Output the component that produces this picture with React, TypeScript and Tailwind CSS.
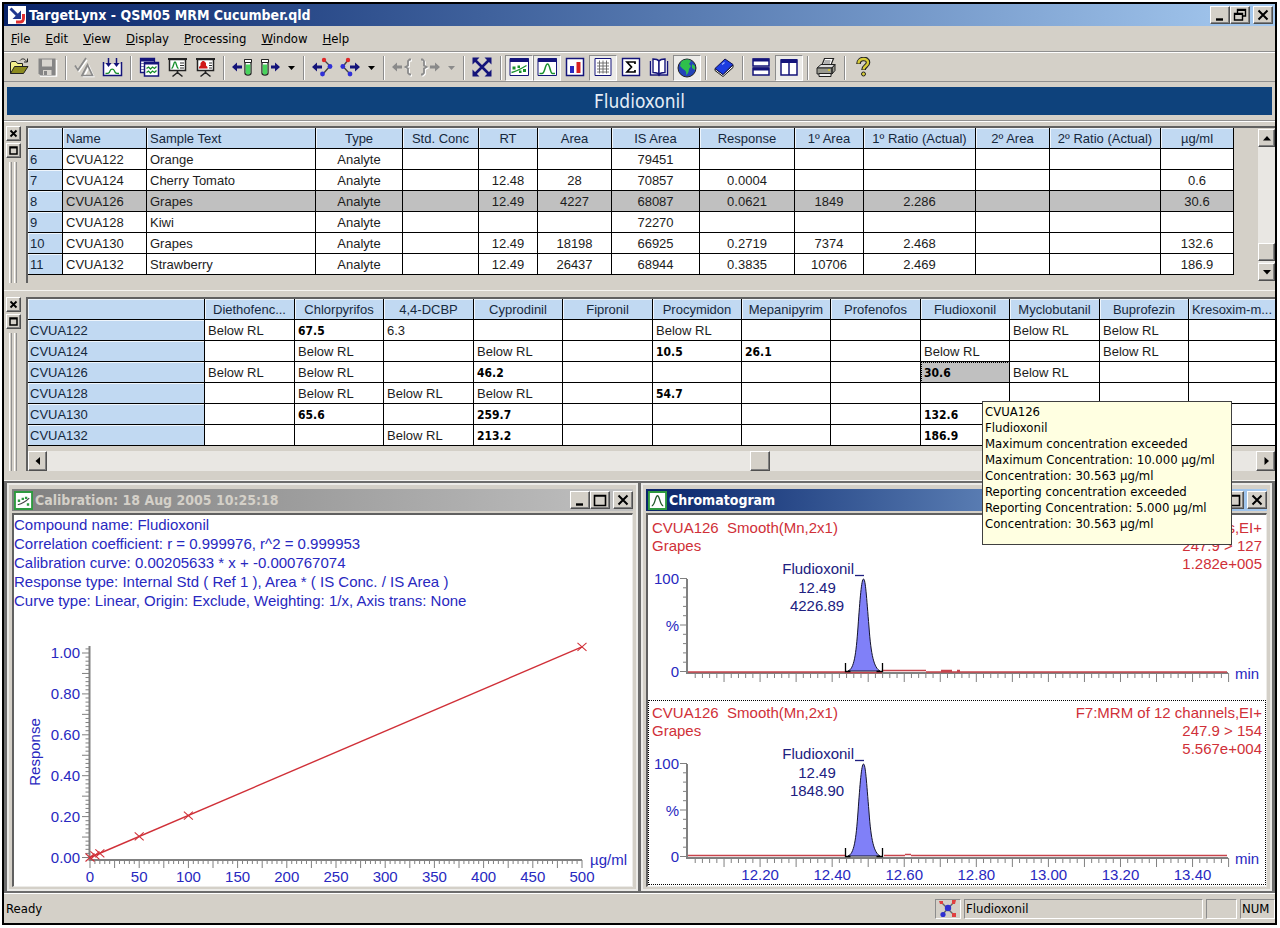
import type { ReactNode } from "react";

const TAHOMA = "font-['DejaVu_Sans_Condensed','DejaVu_Sans',sans-serif]";
const RAISED =
  "bg-[#d4d0c8] border border-t-white border-l-white border-r-[#505050] border-b-[#505050] shadow-[inset_-1px_-1px_0_#808080]";

/* ---------- window chrome ---------- */

function Glyph({ kind }: { kind: string }) {
  return (
    <svg viewBox="0 0 14 14" className="h-3.5 w-3.5" fill="none" stroke="#000" aria-hidden="true">
      {kind === "minimize" && <path d="M3 11.5h7" strokeWidth="2.4" />}
      {kind === "maximize" && <path d="M1.5 12.5v-10h11v10zM1.5 3h11" strokeWidth="1.6" />}
      {kind === "restore" && (
        <path d="M4.5 5V1.5h8v6.5H10M4.5 2.2h8M1.5 5.5h8v6.5h-8zM1.5 6.3h8" strokeWidth="1.4" />
      )}
      {kind === "close" && <path d="M2.5 2.5l9 9M11.5 2.5l-9 9" strokeWidth="2" />}
    </svg>
  );
}

function CaptionButton({ kind, label }: { kind: string; label: string }) {
  return (
    <button aria-label={label} className={`flex h-[18px] w-5 items-center justify-center ${RAISED}`}>
      <Glyph kind={kind} />
    </button>
  );
}

function CaptionButtons({ middle }: { middle: string }) {
  return (
    <div className="flex">
      <CaptionButton kind="minimize" label="Minimize" />
      <CaptionButton kind={middle} label={middle === "restore" ? "Restore" : "Maximize"} />
      <div className="w-[3px]" />
      <CaptionButton kind="close" label="Close" />
    </div>
  );
}

function Arrow({ d }: { d: string }) {
  return (
    <svg viewBox="0 0 10 10" className="h-2.5 w-2.5" aria-hidden="true">
      <path d={d} fill="#000" />
    </svg>
  );
}

/* ---------- toolbar icons ---------- */

const NAVY = "#14147a";

const icons: Record<string, ReactNode> = {
  open: (
    <>
      <path d="M1.5 16.500v-11l1.500-1h4l1.500 2h5v3" fill="#f4f08c" stroke="#222" />
      <path d="M1.500 16.500l4-7h13.500l-4.500 7z" fill="#8c8a1e" stroke="#222" />
      <path d="M11 3.500c2-2.500 5-2 6.500 1M18.500 1.500v3.500h-3.500" fill="none" stroke="#222" />
    </>
  ),
  save: (
    <>
      <path d="M3 19h16.500V3" fill="none" stroke="#fff" strokeWidth="1.5" />
      <path d="M1.500 1.500h17v17h-15l-2-2z" fill="#858585" />
      <path d="M5 2.500h10v7H5z" fill="#d8d5cf" />
      <path d="M6 13h8.500v5H6z" fill="#d8d5cf" />
      <path d="M7 14h3v4H7z" fill="#858585" />
    </>
  ),
  process: (
    <g fill="none" strokeWidth="1.700">
      <path d="M2 9.500l3 4.500 8-11M10 19.500l5-10 4.500 10z" stroke="#fff" />
      <path d="M1 8.500l3 4.500 8-12" stroke="#8a8a8a" />
      <path d="M8 18.500l5.500-10.500 5 10.500z" stroke="#8a8a8a" />
    </g>
  ),
  integrate: (
    <>
      <path d="M2 7h17v12H2z" fill="#fff" />
      <path d="M1.500 5v13.500h18V5" fill="none" stroke={NAVY} strokeWidth="1.500" />
      <path d="M6.500 1v7M14.500 1v7" stroke={NAVY} strokeWidth="1.500" />
      <path d="M3.500 6h6l-3 4zM11.500 6h6l-3 4z" fill={NAVY} />
      <path d="M3.500 16.500c3 0 3.500 0 4.500-2.500s3.500-2.500 4.500 0 1.500 2.500 4.500 2.500" fill="none" stroke="#18902c" strokeWidth="1.300" />
    </>
  ),
  windows: (
    <g stroke={NAVY}>
      <path d="M1.500 1.500h14v14h-14z" fill="#fff" strokeWidth="1.300" />
      <path d="M1.500 3h14" strokeWidth="3" />
      <path d="M2 6.500h3M2 9.500h3M2 12.500h3" stroke="#7777aa" />
      <path d="M5.500 5.500h14v13.500h-14z" fill="#fff" strokeWidth="1.500" />
      <path d="M5.500 6.500h14" strokeWidth="2" />
      <path d="M7.500 11.500l2-1.500 2 2 2-2 2 1.500 2-2M7.500 15.500l2-1.500 2 2 2-2 2 1.500 2-2" fill="none" stroke="#18902c" strokeWidth="1.300" />
    </g>
  ),
  board: (
    <>
      <path d="M2.500 2.500h16v11h-16z" fill="#fff" stroke="#222" strokeWidth="1.500" />
      <path d="M1 2h19" stroke="#222" strokeWidth="2" />
      <path d="M4.500 11.500c2 0 2-6.500 3.500-6.500s1.500 6.500 3.500 6.500" fill="none" stroke="#18902c" strokeWidth="1.400" />
      <path d="M13 6h4M13 8.500h4M13 11h4" stroke="#333" />
      <path d="M10.500 14v3M10.500 15.500l-5 4M10.500 15.500l5 4" stroke="#222" strokeWidth="1.600" />
    </>
  ),
  alarm: (
    <>
      <path d="M2.500 2.500h16v11h-16z" fill="#fff" stroke="#222" strokeWidth="1.500" />
      <path d="M1 2h19" stroke="#222" strokeWidth="2" />
      <path d="M4 11.500v-1.500l1.500-1.500V6l2-2h1.500l2 2v2.500l1.500 1.500v1.500z" fill="#d01818" />
      <path d="M14 6h3M14 8.500h3M14 11h3" stroke="#333" />
      <path d="M10.500 14v3M10.500 15.500l-5 4M10.500 15.500l5 4" stroke="#222" strokeWidth="1.600" />
    </>
  ),
  prevSample: (
    <>
      <path d="M0 10l5-4.500v3h5v3H5v3z" fill={NAVY} />
      <path d="M13 3v13a3 2 0 006 0V3z" fill="#fff" stroke="#222" strokeWidth="1.300" />
      <path d="M13.700 7.500h4.600V16a2.300 1.500 0 01-4.600 0z" fill="#48d45c" />
      <path d="M12.500 2.500h7v3h-7z" fill="#fff" stroke="#222" />
    </>
  ),
  nextSample: (
    <>
      <path d="M20 10l-5-4.500v3h-4v3h4v3z" fill={NAVY} />
      <path d="M2 3v13a3 2 0 006 0V3z" fill="#fff" stroke="#222" strokeWidth="1.300" />
      <path d="M2.700 7.500h4.600V16a2.300 1.500 0 01-4.600 0z" fill="#48d45c" />
      <path d="M1.500 2.500h7v3h-7z" fill="#fff" stroke="#222" />
    </>
  ),
  prevCompound: (
    <>
      <path d="M12 3l6 6-7 8" fill="none" stroke="#444" strokeWidth="1.400" />
      <path d="M0 10l5-4.500v3h5v3H5v3z" fill={NAVY} />
      <circle cx="12" cy="3" r="2.200" fill="#e02828" />
      <circle cx="18" cy="9.500" r="2.400" fill="#3030d8" />
      <circle cx="10.500" cy="17" r="2.400" fill="#3030d8" />
    </>
  ),
  nextCompound: (
    <>
      <path d="M8 3L3 9.500l7 7.500" fill="none" stroke="#444" strokeWidth="1.400" />
      <path d="M20 10l-5-4.500v3h-5v3h5v3z" fill={NAVY} />
      <circle cx="8" cy="3" r="2.200" fill="#e02828" />
      <circle cx="2.800" cy="9.500" r="2.400" fill="#3030d8" />
      <circle cx="10" cy="17" r="2.400" fill="#3030d8" />
    </>
  ),
  prevGroup: (
    <>
      <path d="M0 10l5-4.500v3h5v3H5v3z" fill="#8a8a8a" />
      <path d="M20 3.500h-1.500l-1.500 1.500v4.500l-2.500 1.500 2.500 1.500V17l1.500 1.500H20" fill="none" stroke="#fff" strokeWidth="1.800" />
      <path d="M19 2.500h-1.500L16 4v4.500L13.500 10l2.500 1.500V16l1.500 1.500H19" fill="none" stroke="#8a8a8a" strokeWidth="1.800" />
    </>
  ),
  nextGroup: (
    <>
      <path d="M20 10l-5-4.500v3h-5v3h5v3z" fill="#8a8a8a" />
      <path d="M2 3.500h1.500L5 5v4.500L7.500 11 5 12.500V17l-1.500 1.500H2" fill="none" stroke="#fff" strokeWidth="1.800" />
      <path d="M1 2.500h1.500L4 4v4.500L6.500 10 4 11.500V16l-1.500 1.500H1" fill="none" stroke="#8a8a8a" strokeWidth="1.800" />
    </>
  ),
  fit: (
    <>
      <path d="M3 3l14 14M17 3L3 17" stroke={NAVY} strokeWidth="2.600" />
      <path d="M.5.500h7l-7 7zM19.500.500v7l-7-7zM.5 19.500v-7l7 7zM19.500 19.500h-7l7-7z" fill={NAVY} />
    </>
  ),
  calibration: (
    <>
      <path d="M1 1.500h18.500v17H1z" fill="#fff" stroke={NAVY} />
      <path d="M1 3h18.500" stroke={NAVY} strokeWidth="4" />
      <path d="M2.500 15.500c5-1 10-4 15-7" fill="none" stroke="#18902c" strokeWidth="1.300" />
      <path d="M3.500 9.500h3v3h-3zM8.500 8.500h2.500v2.500H8.500zM10 13.500h2.500V16H10zM14 12h3v3h-3z" fill="#18902c" />
    </>
  ),
  chromatogram: (
    <>
      <path d="M1 1.500h18.500v17H1z" fill="#fff" stroke={NAVY} />
      <path d="M1 3h18.500" stroke={NAVY} strokeWidth="4" />
      <path d="M2.500 16.500h2.500c3 0 3-9.500 5.500-9.500s2.500 9.500 5 9.500H18" fill="none" stroke="#18902c" strokeWidth="1.500" />
    </>
  ),
  bars: (
    <>
      <path d="M1.500 1.500h17v17h-17z" fill="#fff" stroke={NAVY} strokeWidth="1.500" />
      <path d="M5 9h4v7H5z" fill="#2a2ac0" />
      <path d="M11.500 5h4v11h-4z" fill="#d82020" />
    </>
  ),
  sheet: (
    <>
      <path d="M2 1.500h16v17H2z" fill="#fff" stroke={NAVY} />
      <path d="M4 6h12M4 9h12M4 12h12M4 15h12M6.500 3.500v13M10 3.500v13M13.500 3.500v13" stroke="#666" strokeWidth=".9" />
    </>
  ),
  sigma: (
    <>
      <path d="M1.500 1.500h17v17h-17z" fill="#fff" stroke={NAVY} strokeWidth="1.400" />
      <path d="M14 7V5H6l4.500 5L6 15h8v-2" fill="none" stroke="#000" strokeWidth="1.700" />
    </>
  ),
  openBook: (
    <g fill="#fff" stroke={NAVY} strokeWidth="1.400">
      <path d="M1.500 4v14h17V4" />
      <path d="M10 4c-1.500-2-4-2-6-2v13.500c2 0 4.500 0 6 2z" />
      <path d="M10 4c1.500-2 4-2 6-2v13.500c-2 0-4.500 0-6 2z" />
    </g>
  ),
  globe: (
    <>
      <circle cx="10" cy="11" r="9" fill="#2343b8" stroke="#222" />
      <path d="M4 5c3-3 8-3 10-1l-2 3 2 2-2 3c0 3-2 6-3 6 1-3-1-5-3-6L3 9z" fill="#2fbf4c" />
      <path d="M15 7l3 2v4l-3-2z" fill="#2fbf4c" />
    </>
  ),
  blueBook: (
    <>
      <path d="M1 11.500l8 6 10-9.500v2.500l-10 9-8-6z" fill="#fff" stroke="#111" />
      <path d="M1 11.500L11 2l8 5.500-10 10z" fill="#1c3ce0" stroke="#101050" />
      <path d="M8 7.500l2.500-2" stroke="#9db4ff" strokeWidth="1.300" />
    </>
  ),
  tileRows: (
    <>
      <path d="M2 2h16v7H2zM2 11h16v7H2z" fill="#fff" stroke={NAVY} strokeWidth="1.500" />
      <path d="M2 3h16M2 12h16" stroke={NAVY} strokeWidth="3" />
    </>
  ),
  tileColumns: (
    <>
      <path d="M2 3h8v15H2zM10 3h8v15h-8z" fill="#fff" stroke={NAVY} strokeWidth="1.500" />
      <path d="M2 4h16" stroke={NAVY} strokeWidth="4" />
    </>
  ),
  print: (
    <>
      <path d="M6 8l2.500-6.500h9L15 8z" fill="#fff" stroke="#222" strokeWidth="1.200" />
      <path d="M8.500 4h6M8 6h6" stroke="#555" strokeWidth=".9" />
      <path d="M1 11l4-3.500h14l-3 3.500z" fill="#ddd" stroke="#222" />
      <path d="M1 11h15v6H1zM16 11l3-3.500v6L16 17z" fill="#9a9a90" stroke="#222" />
      <path d="M3 16.500h12v3H3z" fill="#eee" stroke="#222" />
      <path d="M12 13h2" stroke="#e0d020" strokeWidth="1.500" />
    </>
  ),
  help: (
    <g fill="none">
      <path d="M5.500 7c0-6.500 9.500-6.500 9.500-1.500 0 3.500-4.500 3.500-4.500 7.500" stroke="#222" strokeWidth="4.600" />
      <path d="M5.500 6.500c0-5.500 9.500-6 9.500-1 0 3.500-4.500 3.500-4.500 7" stroke="#d8cc38" strokeWidth="2.400" />
      <circle cx="10.500" cy="17" r="2" fill="#d8cc38" stroke="#222" />
    </g>
  ),
};

interface Tool {
  icon: string;
  label: string;
  pressed?: boolean;
}

const toolGroups: { tools: Tool[]; caret?: string }[] = [
  { tools: [{ icon: "open", label: "Open" }, { icon: "save", label: "Save" }] },
  { tools: [{ icon: "process", label: "Process" }, { icon: "integrate", label: "Integrate" }] },
  {
    tools: [
      { icon: "windows", label: "Windows" },
      { icon: "board", label: "Report" },
      { icon: "alarm", label: "Alarms" },
    ],
  },
  {
    tools: [{ icon: "prevSample", label: "Previous sample" }, { icon: "nextSample", label: "Next sample" }],
    caret: "#000",
  },
  {
    tools: [{ icon: "prevCompound", label: "Previous compound" }, { icon: "nextCompound", label: "Next compound" }],
    caret: "#000",
  },
  {
    tools: [{ icon: "prevGroup", label: "Previous group" }, { icon: "nextGroup", label: "Next group" }],
    caret: "#8a8a8a",
  },
  { tools: [{ icon: "fit", label: "Fit" }] },
  {
    tools: [
      { icon: "calibration", label: "Calibration", pressed: true },
      { icon: "chromatogram", label: "Chromatogram", pressed: true },
      { icon: "bars", label: "Statistics" },
      { icon: "sheet", label: "Sheet", pressed: true },
      { icon: "sigma", label: "Summary" },
      { icon: "openBook", label: "Method" },
      { icon: "globe", label: "Globe", pressed: true },
    ],
  },
  { tools: [{ icon: "blueBook", label: "Library" }] },
  {
    tools: [
      { icon: "tileRows", label: "Tile rows" },
      { icon: "tileColumns", label: "Tile columns", pressed: true },
    ],
  },
  { tools: [{ icon: "print", label: "Print" }] },
  { tools: [{ icon: "help", label: "Help" }] },
];

function Toolbar() {
  return (
    <div className="flex h-[30px] items-center border-b border-[#909090] border-t border-t-white pl-[1px] pt-px">
      {toolGroups.map((group, i) => (
        <div key={i} className="flex items-center">
          {i > 0 && (
            <div className="flex w-[9px] justify-center">
              <div className="h-6 w-0.5 border-l border-l-[#8c8c8c] border-r border-r-white" />
            </div>
          )}
          {group.tools.map((t) => (
            <button
              key={t.icon}
              aria-label={t.label}
              aria-pressed={t.pressed}
              className={
                t.pressed
                  ? "flex h-[26px] w-7 items-center justify-center border border-t-[#8c8c8c] border-l-[#8c8c8c] border-r-white border-b-white bg-[#ecebe8]"
                  : "flex h-[26px] w-7 items-center justify-center"
              }
            >
              <svg viewBox="0 0 21 21" className="h-[21px] w-[21px]" aria-hidden="true">
                {icons[t.icon]}
              </svg>
            </button>
          ))}
          {group.caret && (
            <button aria-label="More" className="flex h-[26px] w-[15px] items-center justify-center">
              <svg viewBox="0 0 7 4" className="h-1 w-[7px]" aria-hidden="true">
                <path d="M0 0h7L3.500 4z" fill={group.caret} />
              </svg>
            </button>
          )}
        </div>
      ))}
    </div>
  );
}

/* ---------- docked grids ---------- */

function DockHandle() {
  return (
    <div className="flex w-[22px] shrink-0 flex-col items-center gap-0.5 pr-1">
      <button aria-label="Close panel" className={`flex h-[15px] w-[15px] items-center justify-center ${RAISED}`}>
        <svg viewBox="0 0 9 9" className="h-[9px] w-[9px]" aria-hidden="true">
          <path d="M1.500 1.500l6 6M7.500 1.500l-6 6" stroke="#000" strokeWidth="1.800" />
        </svg>
      </button>
      <button aria-label="Expand panel" className={`flex h-[15px] w-[15px] items-center justify-center ${RAISED}`}>
        <svg viewBox="0 0 9 9" className="h-[9px] w-[9px]" aria-hidden="true">
          <path d="M1 8V1h7v7zM1 1.800h7" fill="none" stroke="#000" strokeWidth="1.500" />
        </svg>
      </button>
      <div className="mt-0.5 flex flex-1 gap-[2px]">
        <div className="w-[3px] border-l border-l-white border-r border-r-[#909090]" />
        <div className="w-[3px] border-l border-l-white border-r border-r-[#909090]" />
      </div>
    </div>
  );
}

const CELL = "h-[21px] overflow-hidden whitespace-nowrap border-b border-r border-black pb-0 pt-[2px] font-normal";
const HEAD = "bg-[#c1d9f2] text-[#16283c] shadow-[inset_1px_1px_0_#eef5fc]";

const sampleHeads = [
  "", "Name", "Sample Text", "Type", "Std. Conc", "RT", "Area", "IS Area", "Response",
  "1º Area", "1º Ratio (Actual)", "2º Area", "2º Ratio (Actual)", "µg/ml",
];
const sampleRows = [
  ["6", "CVUA122", "Orange", "Analyte", "", "", "", "79451", "", "", "", "", "", ""],
  ["7", "CVUA124", "Cherry Tomato", "Analyte", "", "12.48", "28", "70857", "0.0004", "", "", "", "", "0.6"],
  ["8", "CVUA126", "Grapes", "Analyte", "", "12.49", "4227", "68087", "0.0621", "1849", "2.286", "", "", "30.6"],
  ["9", "CVUA128", "Kiwi", "Analyte", "", "", "", "72270", "", "", "", "", "", ""],
  ["10", "CVUA130", "Grapes", "Analyte", "", "12.49", "18198", "66925", "0.2719", "7374", "2.468", "", "", "132.6"],
  ["11", "CVUA132", "Strawberry", "Analyte", "", "12.49", "26437", "68944", "0.3835", "10706", "2.469", "", "", "186.9"],
];

function SampleTable() {
  return (
    <table className="w-[1206px] table-fixed border-separate border-spacing-0 text-[13px] leading-[18px]">
      <colgroup>
        <col className="w-[35px]" />
        <col className="w-[84px]" />
        <col className="w-[169px]" />
        <col className="w-[87px]" />
        <col className="w-[76px]" />
        <col className="w-[59px]" />
        <col className="w-[74px]" />
        <col className="w-[88px]" />
        <col className="w-[95px]" />
        <col className="w-[69px]" />
        <col className="w-[112px]" />
        <col className="w-[74px]" />
        <col className="w-[111px]" />
        <col className="w-[73px]" />
      </colgroup>
      <thead>
        <tr>
          {sampleHeads.map((h, i) => (
            <th key={i} className={`${CELL} ${HEAD} ${i < 3 ? "px-[3px] text-left" : "px-0 text-center"}`}>
              {h}
            </th>
          ))}
        </tr>
      </thead>
      <tbody>
        {sampleRows.map((row) => (
          <tr key={row[0]} className={row[0] === "8" ? "bg-[#c0c0c0]" : "bg-white"}>
            {row.map((v, i) =>
              i === 0 ? (
                <th key={i} className={`${CELL} ${HEAD} px-[2px] text-left`}>
                  {v}
                </th>
              ) : (
                <td
                  key={i}
                  className={`${CELL} text-[#1c1c1c] ${i < 3 ? "px-[3px] text-left" : "px-0 text-center"}`}
                >
                  {v}
                </td>
              ),
            )}
          </tr>
        ))}
      </tbody>
    </table>
  );
}

const compoundHeads = [
  "Diethofenc...", "Chlorpyrifos", "4,4-DCBP", "Cyprodinil", "Fipronil", "Procymidon",
  "Mepanipyrim", "Profenofos", "Fludioxonil", "Myclobutanil", "Buprofezin", "Kresoxim-m...",
];
const BRL = "Below RL";
const compoundRows: [string, string[]][] = [
  ["CVUA122", [BRL, "*67.5", "6.3", "", "", BRL, "", "", "", BRL, BRL, ""]],
  ["CVUA124", ["", BRL, "", BRL, "", "*10.5", "*26.1", "", BRL, "", BRL, ""]],
  ["CVUA126", [BRL, BRL, "", "*46.2", "", "", "", "", "*30.6", BRL, "", ""]],
  ["CVUA128", ["", BRL, BRL, BRL, "", "*54.7", "", "", "", "", "", ""]],
  ["CVUA130", ["", "*65.6", "", "*259.7", "", "", "", "", "*132.6", "", "", ""]],
  ["CVUA132", ["", "", BRL, "*213.2", "", "", "", "", "*186.9", "", "", ""]],
];

function CompoundTable() {
  return (
    <table className="w-full min-w-[1247px] table-fixed border-separate border-spacing-0 text-[13px] leading-[18px]">
      <colgroup>
        <col className="w-[177px]" />
        <col className="w-[90px]" />
        <col className="w-[89px]" />
        <col className="w-[90px]" />
        <col className="w-[89px]" />
        <col className="w-[90px]" />
        <col className="w-[89px]" />
        <col className="w-[89px]" />
        <col className="w-[90px]" />
        <col className="w-[89px]" />
        <col className="w-[90px]" />
        <col className="w-[89px]" />
        <col />
      </colgroup>
      <thead>
        <tr>
          <th aria-label="Sample" className={`${CELL} ${HEAD}`} />
          {compoundHeads.map((h) => (
            <th key={h} className={`${CELL} ${HEAD} px-0 text-center last:border-r-0`}>
              {h}
            </th>
          ))}
        </tr>
      </thead>
      <tbody>
        {compoundRows.map(([name, values]) => (
          <tr key={name} className="bg-white">
            <th className={`${CELL} ${HEAD} px-[2px] text-left`}>{name}</th>
            {values.map((v, i) => {
              const bold = v.startsWith("*");
              const selected = name === "CVUA126" && i === 8;
              return (
                <td
                  key={i}
                  className={`${CELL} px-[3px] text-left text-[#1c1c1c] last:border-r-0 ${
                    selected ? "bg-[#c0c0c0] outline-1 -outline-offset-1 outline-dotted outline-black" : ""
                  }`}
                >
                  {bold ? <b className={`${TAHOMA} text-[12px] text-black`}>{v.slice(1)}</b> : v}
                </td>
              );
            })}
          </tr>
        ))}
      </tbody>
    </table>
  );
}

const TRACK = "bg-[#e9e7e3]";

/* ---------- charts ---------- */

const range = (n: number) => Array.from({ length: n }, (_, i) => i);

function CalibrationChart() {
  const x = (v: number) => 76 + v * 0.984;
  const y = (v: number) => 342.500 - v * 204.500;
  const points = [
    [0, 0],
    [5, 0.010],
    [10, 0.020],
    [50, 0.103],
    [100, 0.205],
    [500, 1.030],
  ];
  return (
    <svg viewBox="0 0 618 370" className="w-full [grid-area:1/1]" role="img" aria-label="Calibration curve" fontSize="15">
      <g fill="#2828c0">
        {["0.00", "0.20", "0.40", "0.60", "0.80", "1.00"].map((t, i) => (
          <text key={t} x="66" y={y(i * 0.2) + 5} textAnchor="end">
            {t}
          </text>
        ))}
        {range(11).map((i) => (
          <text key={i} x={x(i * 50)} y="367" textAnchor="middle">
            {i * 50}
          </text>
        ))}
        <text x="576" y="350">
          µg/ml
        </text>
        <text transform="translate(26 237) rotate(-90)" textAnchor="middle">
          Response
        </text>
      </g>
      <g stroke="#808080">
        <path d="M75.500 131V345H568" fill="none" strokeWidth="2" />
        {range(52).map((i) => (
          <path key={i} d={`M${i % 5 === 0 ? 68 : 71.500} ${y(i * 0.02)}H75`} strokeWidth="1" />
        ))}
        {range(101).map((i) => (
          <path key={i} d={`M${x(i * 5)} 345v${i % 5 === 0 ? 8 : 4}`} strokeWidth="1" />
        ))}
      </g>
      <g stroke="#d03038" strokeWidth="1.400" fill="none">
        <path d={`M${x(0)} ${y(0)}L${x(500)} ${y(1.030)}`} />
        {points.map(([px, py]) => (
          <path key={px} d={`M${x(px) - 4.500} ${y(py) - 4}l9 8m0-8l-9 8`} strokeWidth="1.100" />
        ))}
      </g>
    </svg>
  );
}

interface Trace {
  area: string;
  channel: string;
  transition: string;
  intensity: string;
  showScale: boolean;
  noise: string;
}

const traces: Trace[] = [
  {
    area: "4226.89",
    channel: "F7:MRM of 12 channels,EI+",
    transition: "247.9 > 127",
    intensity: "1.282e+005",
    showScale: false,
    noise: "M40 157H197M197 157.500H234M234 155.500H278M293 155.500H304M309 155.500H312M278 157H579",
  },
  {
    area: "1848.90",
    channel: "F7:MRM of 12 channels,EI+",
    transition: "247.9 > 154",
    intensity: "5.567e+004",
    showScale: true,
    noise: "M40 155.500H197M236 155.500H257M257 154.500H263M263 155.500H579",
  },
];

function TracePane({ t }: { t: Trace }) {
  const x = (min: number) => 40 + (min - 12) * 360.400;
  return (
    <section
      className={`grid ${t.showScale ? "outline-1 -outline-offset-1 outline-dotted outline-black" : ""}`}
    >
      <div className="flex justify-between px-1 pt-1 text-[15px] leading-[18px] text-[#d03038] [grid-area:1/1]">
        <div className="whitespace-pre">
          <p>{"CVUA126  Smooth(Mn,2x1)"}</p>
          <p>Grapes</p>
        </div>
        <div className="text-right">
          <p>{t.channel}</p>
          <p>{t.transition}</p>
          <p>{t.intensity}</p>
        </div>
      </div>
      <svg viewBox="0 0 618 185" className="w-full [grid-area:1/1]" role="img" aria-label={`Trace ${t.transition}`} fontSize="15">
        <g fill="#2828c0">
          <text x="31" y="69" textAnchor="end">100</text>
          <text x="31" y="116" textAnchor="end">%</text>
          <text x="31" y="162" textAnchor="end">0</text>
          <text x="587" y="164">min</text>
          {t.showScale &&
            range(7).map((i) => (
              <text key={i} x={x(12.200 + i * 0.2)} y="180" textAnchor="middle">
                {(12.200 + i * 0.2).toFixed(2)}
              </text>
            ))}
        </g>
        <g fill="#202080">
          <text x="206" y="59" textAnchor="end">Fludioxonil</text>
          <text x="169" y="78" textAnchor="middle">12.49</text>
          <text x="169" y="96" textAnchor="middle">{t.area}</text>
        </g>
        <g stroke="#808080" fill="none">
          <path d="M39 64V158H580" strokeWidth="2" />
          {range(11).map((i) => (
            <path key={i} d={`M${i % 5 === 0 ? 32 : 35} ${156.500 - i * 9.300}H39`} />
          ))}
          {range(75).map((i) => (
            <path key={i} d={`M${x(12.020 + i * 0.02)} 158v${(i + 1) % 5 === 0 ? 9 : 5}`} />
          ))}
        </g>
        <path d={t.noise} stroke="#c8444c" strokeWidth="1.600" fill="none" />
        <path
          d="M200 156C206 154 208 140 210 112C212 84 213.500 64 215.500 64C217.500 64 218.500 82 221 112C223 140 226 153 232 156Z"
          fill="#8080f8"
          stroke="#14142c"
        />
        <path d="M197.500 148v8.500h5M234.500 148v8.500h-6" stroke="#000" strokeWidth="1.300" fill="none" />
        <path d="M207 60.500h9" stroke="#202080" strokeWidth="1.300" />
      </svg>
    </section>
  );
}

function ChildWindow({
  title,
  active,
  icon,
  children,
}: {
  title: string;
  active: boolean;
  icon: ReactNode;
  children: ReactNode;
}) {
  return (
    <section className="flex min-w-0 flex-1 flex-col border-2 border-[#ecebe8] bg-[#d4d0c8] px-[3px] pb-0.5 pt-1">
      <header
        className={`mb-0.5 flex h-[22px] items-center gap-0.5 bg-linear-to-r pl-0.5 ${
          active ? "from-[#0a246a] to-[#a6caf0] text-white" : "from-[#808080] to-[#c0c0c0] text-[#d4d0c8]"
        }`}
      >
        <svg viewBox="0 0 20 20" className="h-[19px] w-[19px]" aria-hidden="true">
          <path d="M1 1h18v18H1z" fill="#fff" stroke="#2f9a40" strokeWidth="2" />
          {icon}
        </svg>
        <h2 className={`flex-1 text-[14px] font-bold ${TAHOMA}`}>{title}</h2>
        <CaptionButtons middle="maximize" />
      </header>
      <div className="flex-1 border-2 border-b border-r border-b-[#ecebe8] border-l-[#606060] border-r-[#ecebe8] border-t-[#606060] bg-white">
        {children}
      </div>
    </section>
  );
}

const menus = ["File", "Edit", "View", "Display", "Processing", "Window", "Help"];
const tip = [
  "CVUA126",
  "Fludioxonil",
  "Maximum concentration exceeded",
  "Maximum Concentration: 10.000 µg/ml",
  "Concentration: 30.563 µg/ml",
  "Reporting concentration exceeded",
  "Reporting Concentration: 5.000 µg/ml",
  "Concentration: 30.563 µg/ml",
];
const SUNKEN = "border border-t-[#8c8c8c] border-l-[#8c8c8c] border-b-white border-r-white";

export default function App() {
  return (
    <div className="flex min-h-screen bg-white pb-[3px] pl-0.5 pr-[3px] pt-0.5 font-['Liberation_Sans',Arial,sans-serif] text-black">
      <div className="relative flex min-w-0 flex-1 flex-col border-2 border-black bg-[#d4d0c8]">
        <header className="flex h-[22px] items-center gap-[3px] bg-linear-to-r from-[#0a246a] to-[#a6caf0] pl-1 pr-0.5 text-white">
          <svg viewBox="0 0 18 18" className="h-[18px] w-[18px]" aria-hidden="true">
            <path d="M0 0h18v18H0z" fill="#fff" />
            <path d="M15.500 8v4c0 3-1 4-4 4H8" fill="none" stroke="#e03030" strokeWidth="3" />
            <path d="M2.500 2.500l7 7" stroke="#203890" strokeWidth="3" />
            <path d="M13 4.500V13H4.500z" fill="#203890" />
          </svg>
          <h1 className={`flex-1 text-[14px] font-bold ${TAHOMA}`}>TargetLynx - QSM05 MRM Cucumber.qld</h1>
          <CaptionButtons middle="restore" />
        </header>

        <nav className={`flex h-[26px] items-center gap-px border-b border-[#909090] text-[13px] ${TAHOMA}`}>
          {menus.map((m) => (
            <button key={m} className="px-[7px] first-letter:underline">
              {m}
            </button>
          ))}
        </nav>

        <Toolbar />

        <div className="border-b border-[#909090] px-[3px] pb-[5px] pt-[5px]">
          <div className={`h-7 bg-[#0e427c] text-center text-[19px] leading-7 text-[#e4edf6] ${TAHOMA}`}>
            Fludioxonil
          </div>
        </div>

        <section className="flex border-t border-white px-0 pb-[3px] pt-1">
          <DockHandle />
          <div className="flex min-w-0 flex-1 justify-between overflow-hidden border-l-2 border-t-2 border-[#606060] pb-2">
            <SampleTable />
            <div className={`-mb-1.5 mt-px flex w-[17px] shrink-0 flex-col ${TRACK}`}>
              <button aria-label="Scroll up" className={`flex h-[18px] items-center justify-center ${RAISED}`}>
                <Arrow d="M1 7.500h8L5 3z" />
              </button>
              <div className="flex-1" />
              <div className={`h-[18px] ${RAISED}`} />
              <button aria-label="Scroll down" className={`mt-0.5 flex h-[18px] items-center justify-center ${RAISED}`}>
                <Arrow d="M1 3h8L5 7.500z" />
              </button>
            </div>
          </div>
        </section>

        <section className="mt-1 flex border-t border-[#f4f3f0] pb-[9px] pt-1.5">
          <DockHandle />
          <div className="min-w-0 flex-1 overflow-hidden border-l-2 border-t-2 border-[#606060]">
            <CompoundTable />
            <div className={`mt-[5px] flex h-5 ${TRACK}`}>
              <button aria-label="Scroll left" className={`flex w-[19px] items-center justify-center ${RAISED}`}>
                <Arrow d="M7 1v8L2.500 5z" />
              </button>
              <div className="flex-[704]" />
              <div className={`w-5 ${RAISED}`} />
              <div className="flex-[486]" />
              <button aria-label="Scroll right" className={`flex w-[19px] items-center justify-center ${RAISED}`}>
                <Arrow d="M3.500 1v8L8 5z" />
              </button>
            </div>
          </div>
        </section>

        <main className="flex flex-1 gap-[3px] border-t border-[#f4f3f0] bg-[#6c6c6c] px-[3px] pb-0.5 pt-0.5">
          <ChildWindow
            title="Calibration: 18 Aug 2005 10:25:18"
            active={false}
            icon={
              <>
                <path d="M4 14.500c4-1 8-3 12-7" fill="none" stroke="#444" strokeWidth="1.200" />
                <path d="M4 9h2.500v2.500H4zM8 7h2.500v2.500H8zM11.500 6H14v2.500h-2.500zM13.500 13H16v2.500h-2.500z" fill="#2f9a40" />
              </>
            }
          >
            <div className="grid">
              <div className="text-[15px] leading-[19px] text-[#2828c0] [grid-area:1/1]">
                <p>Compound name: Fludioxonil</p>
                <p>Correlation coefficient: r = 0.999976, r^2 = 0.999953</p>
                <p>Calibration curve: 0.00205633 * x + -0.000767074</p>
                <p>Response type: Internal Std ( Ref 1 ), Area * ( IS Conc. / IS Area )</p>
                <p>Curve type: Linear, Origin: Exclude, Weighting: 1/x, Axis trans: None</p>
              </div>
              <CalibrationChart />
            </div>
          </ChildWindow>
          <ChildWindow
            title="Chromatogram"
            active
            icon={
              <path d="M4 15.500c3.500 0 3.500-10.500 6-10.500s2.500 10.500 6 10.500" fill="none" stroke="#245a2c" strokeWidth="1.400" />
            }
          >
            {traces.map((t) => (
              <TracePane key={t.transition} t={t} />
            ))}
          </ChildWindow>
        </main>

        <footer className={`flex h-[30px] items-center gap-[3px] border-t border-white pl-0.5 text-[13px] leading-[18px] ${TAHOMA}`}>
          <span className="flex-1">Ready</span>
          <span className={`flex h-5 w-[26px] items-center justify-center ${SUNKEN}`}>
            <svg viewBox="0 0 18 18" className="h-[18px] w-[18px]" aria-hidden="true">
              <path d="M2 2l13 13M15 2L3 15" stroke="#666" strokeWidth="1.400" />
              <path d="M0 1h4v3H1zM13 0h4l-1 4h-3zM13 13h4v4h-4z" fill="#e04040" />
              <circle cx="9" cy="8" r="3.200" fill="#3030d0" />
              <circle cx="4" cy="14.500" r="2.600" fill="#3030d0" />
            </svg>
          </span>
          <span className={`h-5 w-[239px] pl-px ${SUNKEN}`}>Fludioxonil</span>
          <span className={`h-5 w-[31px] ${SUNKEN}`} />
          <span className={`h-5 w-[35px] pl-px ${SUNKEN}`}>NUM</span>
        </footer>

        <div
          role="tooltip"
          className={`absolute left-[978px] top-[397px] border border-[#404040] bg-[#ffffe1] pb-3 pl-0.5 pr-4 pt-[2px] text-[13px] leading-[16px] ${TAHOMA}`}
        >
          {tip.map((line, i) => (
            <p key={i}>{line}</p>
          ))}
        </div>
      </div>
    </div>
  );
}
